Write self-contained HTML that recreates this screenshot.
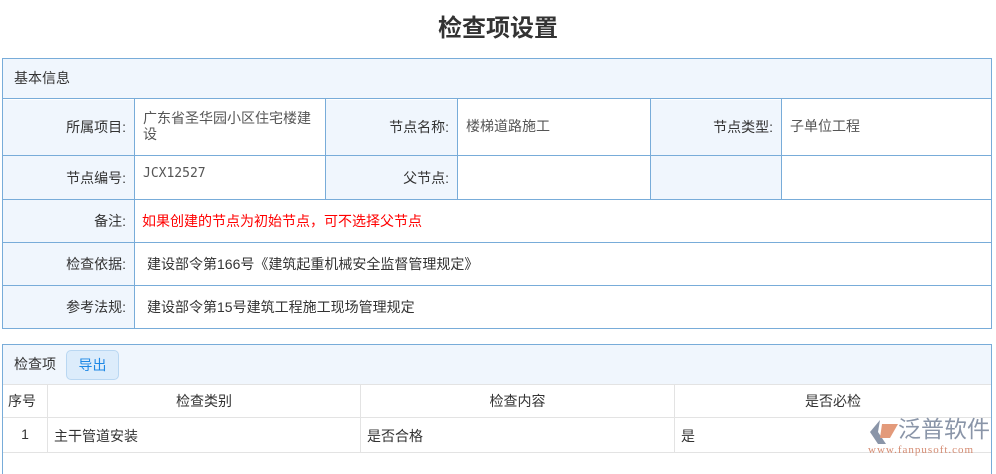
<html><head><style>
body{margin:0;width:996px;height:462px;overflow:hidden;background:#fff;font-family:"Liberation Sans","Noto Sans CJK SC",sans-serif;font-size:14px;color:#333}
.t{position:absolute;top:8px;left:0;width:996px;text-align:center;font-size:24px;font-weight:bold;color:#333}
.a{position:absolute;box-sizing:border-box;white-space:nowrap}
.b{border:1px solid #78acd9}
.l{background:#f0f6fd;text-align:right;padding-right:8px}
</style></head><body>
<div class="t">检查项设置</div>
<div class="a b" style="left:2px;top:58px;width:990px;height:271px;background:#fff"></div>
<div class="a" style="left:3px;top:59px;width:988px;height:40px;background:#f0f6fd;border-bottom:1px solid #78acd9;padding:9px 11px">基本信息</div>
<svg class="a" style="left:0;top:0" width="996" height="462">
<g stroke="#78acd9" stroke-width="1" fill="none">
<line x1="2" y1="155.5" x2="991" y2="155.5"/><line x1="2" y1="199.5" x2="991" y2="199.5"/><line x1="2" y1="242.5" x2="991" y2="242.5"/><line x1="2" y1="285.5" x2="991" y2="285.5"/>
<line x1="134.5" y1="99" x2="134.5" y2="328"/><line x1="325.5" y1="99" x2="325.5" y2="199"/><line x1="457.5" y1="99" x2="457.5" y2="199"/><line x1="650.5" y1="99" x2="650.5" y2="199"/><line x1="781.5" y1="99" x2="781.5" y2="199"/>
</g></svg>
<div class="a l" style="left:3px;top:100px;width:131px;height:55px;padding-top:17px">所属项目:</div>
<div class="a" style="left:135px;top:100px;width:190px;padding:10px 8px;line-height:16px;color:#555;white-space:normal">广东省圣华园小区住宅楼建设</div>
<div class="a l" style="left:326px;top:100px;width:131px;height:55px;padding-top:17px">节点名称:</div>
<div class="a" style="left:458px;top:100px;padding:16px 8px;color:#555">楼梯道路施工</div>
<div class="a l" style="left:651px;top:100px;width:130px;height:55px;padding-top:17px">节点类型:</div>
<div class="a" style="left:782px;top:100px;padding:16px 8px;color:#555">子单位工程</div>
<div class="a l" style="left:3px;top:156px;width:131px;height:43px;padding-top:12px">节点编号:</div>
<div class="a" style="left:135px;top:156px;padding:10px 8px;color:#555;font-family:'DejaVu Sans Mono',monospace;font-size:13px">JCX12527</div>
<div class="a l" style="left:326px;top:156px;width:131px;height:43px;padding-top:12px">父节点:</div>
<div class="a l" style="left:651px;top:156px;width:130px;height:43px"></div>
<div class="a l" style="left:3px;top:200px;width:131px;height:42px;padding-top:11px">备注:</div>
<div class="a" style="left:135px;top:200px;padding:11px 7px;color:#f00">如果创建的节点为初始节点，可不选择父节点</div>
<div class="a l" style="left:3px;top:243px;width:131px;height:42px;padding-top:11px">检查依据:</div>
<div class="a" style="left:135px;top:243px;padding:11px 12px">建设部令第166号《建筑起重机械安全监督管理规定》</div>
<div class="a l" style="left:3px;top:286px;width:131px;height:42px;padding-top:11px">参考法规:</div>
<div class="a" style="left:135px;top:286px;padding:11px 12px">建设部令第15号建筑工程施工现场管理规定</div>

<div class="a b" style="left:2px;top:344px;width:990px;height:130px;border-bottom:none"></div>
<div class="a" style="left:3px;top:345px;width:988px;height:40px;background:#f0f6fd;border-bottom:1px solid #e3e3e3"></div>
<div class="a" style="left:14px;top:354px">检查项</div>
<div class="a" style="left:66px;top:350px;width:53px;height:30px;background:#dcecfb;border:1px solid #b9d7f2;border-radius:5px;color:#1e88e5;text-align:center;line-height:28px">导出</div>
<svg class="a" style="left:0;top:0" width="996" height="462">
<g stroke="#e3e3e3"><line x1="3" y1="417.5" x2="991" y2="417.5"/><line x1="3" y1="452.5" x2="991" y2="452.5"/>
<line x1="47.5" y1="385" x2="47.5" y2="452"/><line x1="360.5" y1="385" x2="360.5" y2="452"/><line x1="674.5" y1="385" x2="674.5" y2="452"/></g></svg>
<div class="a" style="left:8px;top:391px">序号</div>
<div class="a" style="left:48px;top:391px;width:312px;text-align:center">检查类别</div>
<div class="a" style="left:361px;top:391px;width:313px;text-align:center">检查内容</div>
<div class="a" style="left:675px;top:391px;width:316px;text-align:center">是否必检</div>
<div class="a" style="left:3px;top:426px;width:44px;text-align:center">1</div>
<div class="a" style="left:54px;top:426px">主干管道安装</div>
<div class="a" style="left:367px;top:426px">是否合格</div>
<div class="a" style="left:681px;top:426px">是</div>
<svg class="a" style="left:866px;top:418px" width="36" height="30"><path d="M14 2 L4 14 L12 26 L20 26 L12 14 Z" fill="#8a95a8"/><path d="M16 6 L32 6 L24 20 L14 20 Z" fill="#e39a7a"/></svg>
<div class="a" style="left:898px;top:416px;font-size:23px;color:#8a95a8;line-height:26px">泛普软件</div>
<div class="a" style="left:868px;top:444px;font-size:11px;color:#d48a70;font-family:'Liberation Serif',serif;letter-spacing:1px">www.fanpusoft.com</div>
</body></html>
